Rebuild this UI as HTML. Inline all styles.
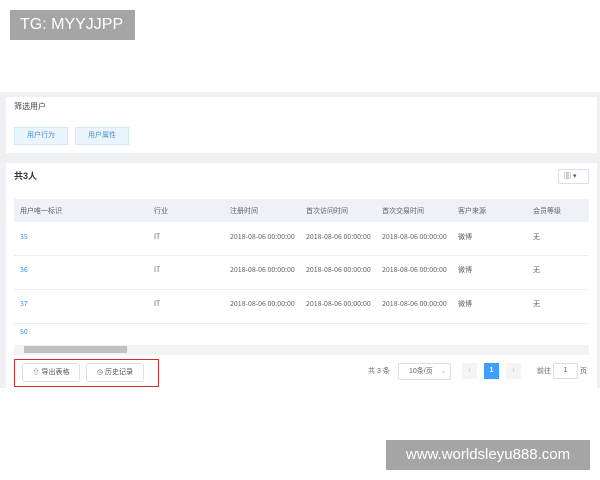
<!DOCTYPE html>
<html><head><meta charset="utf-8"><style>
*{margin:0;padding:0;box-sizing:border-box}
body{width:600px;height:480px;background:#fff;position:relative;overflow:hidden;font-family:"Liberation Sans","Noto Sans CJK SC",sans-serif;color:#606266}
.a{position:absolute}
.t{font-size:7px;white-space:nowrap;line-height:9px}
.d{font-family:"Noto Sans CJK SC",sans-serif}
</style></head><body>
<div class="a" style="left:10px;top:10px;width:125px;height:30px;background:#a5a5a5;color:#fff;font-size:16px;line-height:30px;padding-left:10px">TG: MYYJJPP</div>
<div class="a" style="left:0;top:92px;width:600px;height:296px;background:#eef0f3"></div>
<div class="a" style="left:6px;top:97px;width:591px;height:56px;background:#fff"></div>
<div class="a t" style="left:14px;top:102px;font-size:8px;line-height:10px;color:#444">筛选用户</div>
<div class="a t" style="left:14px;top:127px;width:54px;height:18px;border:1px solid #d7e6f3;background:#eaf4fc;color:#4a90d0;text-align:center;line-height:16px">用户行为</div>
<div class="a t" style="left:75px;top:127px;width:54px;height:18px;border:1px solid #d7e6f3;background:#eaf4fc;color:#4a90d0;text-align:center;line-height:16px">用户属性</div>
<div class="a" style="left:6px;top:163px;width:591px;height:225px;background:#fff"></div>
<div class="a t" style="left:14px;top:171px;font-size:9px;line-height:11px;color:#333;font-weight:bold">共3人</div>
<div class="a" style="left:558px;top:169px;width:31px;height:15px;border:1px solid #dcdfe6;border-radius:2px;font-size:7px;line-height:13px;padding-left:5px;color:#555">▥ ▾</div>
<div class="a" style="left:14px;top:199px;width:575px;height:23px;background:#eef1f6"></div>
<div class="a t" style="left:20px;top:207px">用户唯一标识</div>
<div class="a t" style="left:154px;top:207px">行业</div>
<div class="a t" style="left:230px;top:207px">注册时间</div>
<div class="a t" style="left:306px;top:207px">首次访问时间</div>
<div class="a t" style="left:382px;top:207px">首次交易时间</div>
<div class="a t" style="left:458px;top:207px">客户来源</div>
<div class="a t" style="left:533px;top:207px">会员等级</div>
<div class="a" style="left:14px;top:255px;width:575px;height:1px;background:#ebeef5"></div>
<div class="a" style="left:14px;top:289px;width:575px;height:1px;background:#ebeef5"></div>
<div class="a" style="left:14px;top:323px;width:575px;height:1px;background:#ebeef5"></div>
<div class="a t d" style="left:20px;top:233px;color:#3a8ee6">35</div>
<div class="a t d" style="left:20px;top:266px;color:#3a8ee6">36</div>
<div class="a t d" style="left:20px;top:300px;color:#3a8ee6">37</div>
<div class="a t d" style="left:20px;top:328px;color:#3a8ee6">50</div>
<div class="a t d" style="left:154px;top:233px">IT</div><div class="a t d" style="left:154px;top:266px">IT</div><div class="a t d" style="left:154px;top:300px">IT</div>
<div class="a t d" style="left:230px;top:233px">2018-08-06 00:00:00</div><div class="a t d" style="left:306px;top:233px">2018-08-06 00:00:00</div><div class="a t d" style="left:382px;top:233px">2018-08-06 00:00:00</div>
<div class="a t d" style="left:230px;top:266px">2018-08-06 00:00:00</div><div class="a t d" style="left:306px;top:266px">2018-08-06 00:00:00</div><div class="a t d" style="left:382px;top:266px">2018-08-06 00:00:00</div>
<div class="a t d" style="left:230px;top:300px">2018-08-06 00:00:00</div><div class="a t d" style="left:306px;top:300px">2018-08-06 00:00:00</div><div class="a t d" style="left:382px;top:300px">2018-08-06 00:00:00</div>
<div class="a t d" style="left:458px;top:233px">微博</div><div class="a t d" style="left:458px;top:266px">微博</div><div class="a t d" style="left:458px;top:300px">微博</div>
<div class="a t d" style="left:533px;top:233px">无</div><div class="a t d" style="left:533px;top:266px">无</div><div class="a t d" style="left:533px;top:300px">无</div>
<div class="a" style="left:14px;top:345px;width:575px;height:10px;background:#f3f3f3"></div>
<div class="a" style="left:24px;top:346px;width:103px;height:7px;background:#c1c1c1"></div>
<div class="a" style="left:14px;top:359px;width:145px;height:28px;border:1px solid #c9302c"></div>
<div class="a t" style="left:22px;top:363px;width:58px;height:19px;border:1px solid #dcdfe6;border-radius:3px;text-align:center;line-height:17px;color:#555">⇧ 导出表格</div>
<div class="a t" style="left:86px;top:363px;width:58px;height:19px;border:1px solid #dcdfe6;border-radius:3px;text-align:center;line-height:17px;color:#555">◷ 历史记录</div>
<div class="a t" style="left:368px;top:367px">共 3 条</div>
<div class="a t" style="left:398px;top:363px;width:53px;height:17px;border:1px solid #dcdfe6;border-radius:2px;line-height:15px;padding-left:10px">10条/页 <span style="color:#bbb;margin-left:6px">⌄</span></div>
<div class="a t" style="left:462px;top:363px;width:15px;height:16px;background:#f4f4f5;color:#bbb;text-align:center;line-height:16px">‹</div>
<div class="a t" style="left:484px;top:363px;width:15px;height:16px;background:#409eff;color:#fff;text-align:center;line-height:16px;font-weight:bold">1</div>
<div class="a t" style="left:506px;top:363px;width:15px;height:16px;background:#f4f4f5;color:#bbb;text-align:center;line-height:16px">›</div>
<div class="a t" style="left:537px;top:367px">前往</div>
<div class="a t" style="left:553px;top:363px;width:25px;height:16px;border:1px solid #dcdfe6;border-radius:2px;text-align:center;line-height:14px">1</div>
<div class="a t" style="left:580px;top:367px">页</div>
<div class="a" style="left:386px;top:440px;width:204px;height:30px;background:#a5a5a5;color:#fff;font-size:15px;line-height:30px;text-align:center">www.worldsleyu888.com</div>
</body></html>
